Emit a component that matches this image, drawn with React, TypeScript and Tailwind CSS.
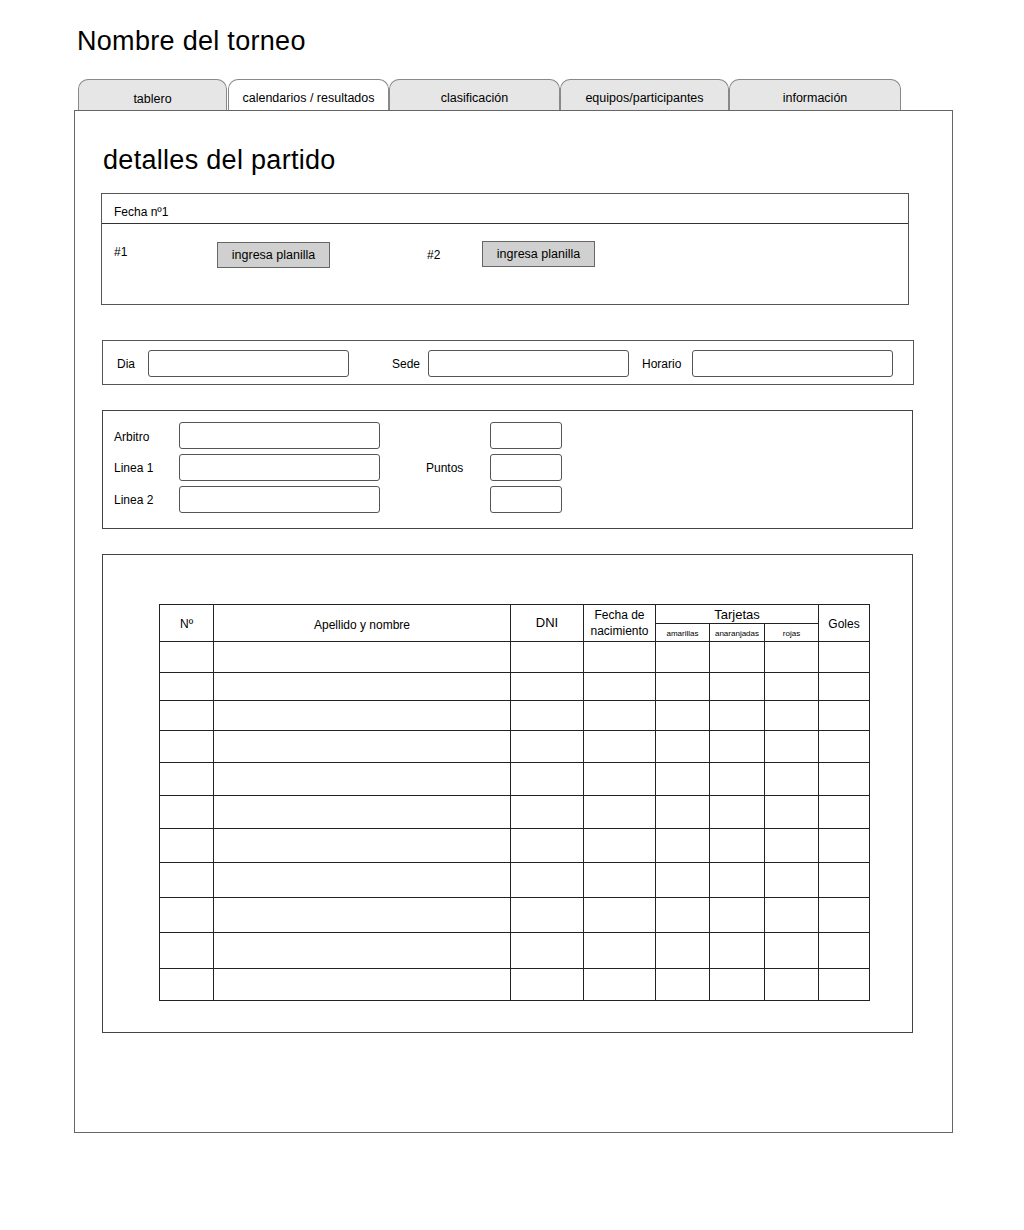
import React from "react";

const rowHeights = [
  "h-[31px]",
  "h-[28px]",
  "h-[30px]",
  "h-[32px]",
  "h-[33px]",
  "h-[33px]",
  "h-[34px]",
  "h-[35px]",
  "h-[35px]",
  "h-[36px]",
  "h-[31px]",
];

const colW = [
  "w-[54px]",
  "w-[297px]",
  "w-[73px]",
  "w-[72px]",
  "w-[54px]",
  "w-[55px]",
  "w-[54px]",
  "w-[50px]",
];

function Input({ w }: { w: string }) {
  return <div className={`${w} h-[27px] rounded-[3px] border border-[#555] bg-white`} />;
}

function Tab({ label, active, w, extra }: { label: string; active?: boolean; w: string; extra?: string }) {
  return (
    <div
      className={`${w} ${extra ?? ""} h-full rounded-t-[10px] border border-b-0 border-[#888] ${
        active ? "bg-white" : "bg-[#e6e6e6]"
      } flex justify-center pt-[11px] text-[12.5px] leading-[14px]`}
    >
      {label}
    </div>
  );
}

export default function App() {
  return (
    <div className="w-[1024px] h-[1230px] bg-white text-black font-['Liberation_Sans',Arial,sans-serif]">
      <h1 className="pl-[77px] pt-[26px] text-[27px] leading-[31px] tracking-[0.3px] font-normal">Nombre del torneo</h1>

      <div className="ml-[78px] mt-[22px] flex h-[31px] items-end">
        <Tab label="tablero" w="w-[149px]" extra="pt-[12px] h-[30px]" />
        <Tab label="calendarios / resultados" w="w-[161px]" extra="ml-px" active />
        <Tab label="clasificación" w="w-[171px]" />
        <Tab label="equipos/participantes" w="w-[169px]" />
        <Tab label="información" w="w-[172px]" />
      </div>

      <div className="ml-[74px] w-[879px] h-[1023px] border border-[#666]">
        <h2 className="ml-[28px] pt-[34px] text-[27px] leading-[31px] tracking-[0.3px] font-normal">detalles del partido</h2>

        {/* Fecha box */}
        <div className="ml-[26px] mt-[17px] w-[808px] border border-[#555]">
          <div className="h-[30px] border-b border-[#333] pl-[12px] pt-[11px] text-[12px] leading-[14px]">
            Fecha nº1
          </div>
          <div className="h-[80px] pl-[12px] pt-[17px] flex items-start text-[12px] leading-[14px]">
            <div className="w-[103px] pt-[4px]">#1</div>
            <div className="w-[113px] h-[26px] mt-px bg-[#d0d0d0] border border-[#666] flex items-center justify-center text-[12.5px]">
              ingresa planilla
            </div>
            <div className="ml-[97px] w-[55px] pt-[7px]">#2</div>
            <div className="w-[113px] h-[26px] bg-[#d0d0d0] border border-[#666] flex items-center justify-center text-[12.5px]">
              ingresa planilla
            </div>
          </div>
        </div>

        {/* Dia / Sede / Horario */}
        <div className="ml-[27px] mt-[35px] w-[812px] h-[45px] border border-[#555] flex items-center pl-[14px] pt-[2px] text-[12px]">
          <span className="w-[31px]">Dia</span>
          <Input w="w-[201px]" />
          <span className="ml-[43px] w-[36px]">Sede</span>
          <Input w="w-[201px]" />
          <span className="ml-[13px] w-[50px]">Horario</span>
          <Input w="w-[201px]" />
        </div>

        {/* Arbitro / Puntos */}
        <div className="ml-[27px] mt-[25px] w-[811px] h-[119px] border border-[#444] pl-[11px] pt-[11px] flex items-start text-[12px]">
          <div className="flex flex-col gap-[5px]">
            {["Arbitro", "Linea 1", "Linea 2"].map((l, i) => (
              <div key={l} className="flex items-center">
                <span className={`w-[65px] ${i === 0 ? "pt-[2px]" : ""}`}>{l}</span>
                <Input w="w-[201px]" />
              </div>
            ))}
          </div>
          <div className="ml-[46px] w-[64px] h-[91px] flex items-center">Puntos</div>
          <div className="flex flex-col gap-[5px]">
            <Input w="w-[72px]" />
            <Input w="w-[72px]" />
            <Input w="w-[72px]" />
          </div>
        </div>

        {/* Table box */}
        <div className="ml-[27px] mt-[25px] w-[811px] h-[479px] border border-[#444] pl-[56px] pt-[49px]">
          <div className="w-[711px] border border-[#222]">
            <div className="flex h-[37px] border-b border-[#222] text-[12px] leading-[16px]">
              <div className={`${colW[0]} border-r border-[#222] flex items-center justify-center pt-[2px]`}>Nº</div>
              <div className={`${colW[1]} border-r border-[#222] flex items-center justify-center pt-[3px]`}>
                Apellido y nombre
              </div>
              <div className={`${colW[2]} border-r border-[#222] flex items-center justify-center text-[13px]`}>
                DNI
              </div>
              <div className={`${colW[3]} border-r border-[#222] flex flex-col items-center justify-center text-center text-[12px] leading-[16px]`}>
                <span>Fecha de</span>
                <span>nacimiento</span>
              </div>
              <div className="w-[163px] border-r border-[#222] flex flex-col">
                <div className="h-[19px] border-b border-[#222] flex items-center justify-center text-[13px] pt-[2px]">
                  Tarjetas
                </div>
                <div className="flex flex-1 text-[8px] leading-[10px]">
                  <div className={`${colW[4]} border-r border-[#222] flex items-center justify-center pt-[3px]`}>amarillas</div>
                  <div className={`${colW[5]} border-r border-[#222] flex items-center justify-center pt-[3px]`}>anaranjadas</div>
                  <div className="w-[53px] flex items-center justify-center pt-[3px]">rojas</div>
                </div>
              </div>
              <div className={`${colW[7]} flex items-center justify-center pt-[2px]`}>Goles</div>
            </div>
            {rowHeights.map((h, i) => (
              <div key={i} className={`flex ${h} ${i < rowHeights.length - 1 ? "border-b border-[#222]" : ""}`}>
                {colW.map((w, j) => (
                  <div key={j} className={`${w} ${j < colW.length - 1 ? "border-r border-[#222]" : ""}`} />
                ))}
              </div>
            ))}
          </div>
        </div>
      </div>
    </div>
  );
}
